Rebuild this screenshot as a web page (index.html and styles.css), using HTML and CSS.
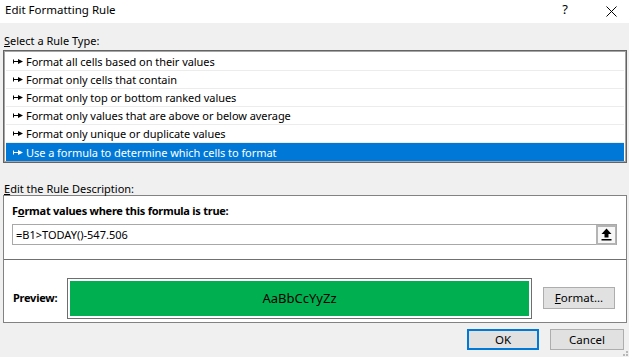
FILE: index.html
```html
<!DOCTYPE html>
<html>
<head>
    <title>Edit Formatting Rule</title>
    <link rel="stylesheet" href="styles.css">
</head>
<body>
    <div class="dialog">
        <div class="titlebar">
            <span class="title">Edit Formatting Rule</span>
            <span class="help">?</span>
            <svg class="close" width="11" height="11" viewBox="0 0 11 11">
                <path d="M0.5 0.5 L10.5 10.5 M10.5 0.5 L0.5 10.5" stroke="#000" stroke-width="1" fill="none"/>
            </svg>
        </div>

        <div class="content">
            <div class="label"><u>S</u>elect a Rule Type:</div>
            <div class="rule-list">
                <div class="rule"><svg class="arrow" width="10" height="5" viewBox="0 0 10 5"><path d="M0 0.5 H1 V4.5 H0 Z M1 2 H5 V3 H1 Z M5 0 L10 2.5 L5 5 Z" fill="currentColor"/></svg>Format all cells based on their values</div>
                <div class="rule"><svg class="arrow" width="10" height="5" viewBox="0 0 10 5"><path d="M0 0.5 H1 V4.5 H0 Z M1 2 H5 V3 H1 Z M5 0 L10 2.5 L5 5 Z" fill="currentColor"/></svg>Format only cells that contain</div>
                <div class="rule"><svg class="arrow" width="10" height="5" viewBox="0 0 10 5"><path d="M0 0.5 H1 V4.5 H0 Z M1 2 H5 V3 H1 Z M5 0 L10 2.5 L5 5 Z" fill="currentColor"/></svg>Format only top or bottom ranked values</div>
                <div class="rule"><svg class="arrow" width="10" height="5" viewBox="0 0 10 5"><path d="M0 0.5 H1 V4.5 H0 Z M1 2 H5 V3 H1 Z M5 0 L10 2.5 L5 5 Z" fill="currentColor"/></svg>Format only values that are above or below average</div>
                <div class="rule"><svg class="arrow" width="10" height="5" viewBox="0 0 10 5"><path d="M0 0.5 H1 V4.5 H0 Z M1 2 H5 V3 H1 Z M5 0 L10 2.5 L5 5 Z" fill="currentColor"/></svg>Format only unique or duplicate values</div>
                <div class="rule selected"><svg class="arrow" width="10" height="5" viewBox="0 0 10 5"><path d="M0 0.5 H1 V4.5 H0 Z M1 2 H5 V3 H1 Z M5 0 L10 2.5 L5 5 Z" fill="currentColor"/></svg>Use a formula to determine which cells to format</div>
            </div>

            <div class="label desc-label"><u>E</u>dit the Rule Description:</div>
            <div class="desc-panel">
                <div class="formula-section">
                    <div class="bold-label">F<u>o</u>rmat values where this formula is true:</div>
                    <div class="formula-input">
                        <span class="formula-text">=B1&gt;TODAY()-547.506</span>
                        <div class="ref-button">
                            <svg width="11" height="13" viewBox="0 0 11 13">
                                <path d="M5.5 0.5 L10.5 6 H7.5 V9.5 H3.5 V6 H0.5 Z" fill="#000"/>
                                <rect x="0.5" y="11" width="10" height="1.5" fill="#000"/>
                            </svg>
                        </div>
                    </div>
                </div>
                <div class="preview-section">
                    <div class="bold-label">Preview:</div>
                    <div class="preview-box">
                        <div class="preview-fill">AaBbCcYyZz</div>
                    </div>
                    <button class="btn format-btn"><u>F</u>ormat...</button>
                </div>
            </div>

            <div class="footer">
                <button class="btn ok-btn">OK</button>
                <button class="btn cancel-btn">Cancel</button>
            </div>
        </div>
        <div class="grip">
            <span></span><span></span><span></span>
        </div>
    </div>
</body>
</html>
```

FILE: styles.css
```css
body {
    margin: 0;
    background-color: #f0f0f0;
    font-family: "Noto Sans", "Open Sans", sans-serif;
    font-size: 11px;
    color: #000;
}
.dialog {
    position: relative;
    width: 629px;
    height: 357px;
    overflow: hidden;
}
.titlebar {
    height: 23px;
    background-color: #fff;
    display: flex;
    align-items: center;
}
.title {
    padding-left: 5px;
    flex-grow: 1;
    font-size: 11.5px;
    line-height: 16px;
    margin-top: -4px;
}
.help {
    font-size: 13px;
    margin-right: 38px;
    margin-top: -5px;
}
.close {
    margin-right: 12px;
    margin-top: -1px;
}
.content {
    padding: 0 2px 0 3px;
}
.label {
    line-height: 16px;
    margin-top: 10px;
    margin-left: 1px;
    height: 17px;
}
.rule-list {
    border: 1px solid #646464;
    box-shadow: inset 0 0 0 1px #a5a5a5;
    background-color: #fff;
    padding: 2px 2px 1px 2px;
}
.rule {
    height: 17px;
    border-bottom: 1px solid #ececec;
    display: flex;
    align-items: center;
    padding-left: 7px;
    line-height: 17px;
    white-space: nowrap;
    letter-spacing: -0.05px;
}
.rule .arrow {
    margin-right: 3px;
    color: #000;
}
.rule.selected {
    background-color: #0078d7;
    color: #fff;
    border-bottom: none;
    height: 18px;
}
.rule.selected .arrow {
    color: #fff;
}
.desc-label {
    margin-top: 18px;
    height: 14px;
}
.desc-panel {
    border: 1px solid #828282;
    background-color: #fff;
}
.formula-section {
    padding: 7px 9px 14px 8px;
    border-bottom: 1px solid #707070;
}
.bold-label {
    font-weight: bold;
    line-height: 16px;
    white-space: nowrap;
    letter-spacing: -0.25px;
}
.formula-input {
    margin-top: 5px;
    height: 19px;
    border: 1px solid #a8a8a8;
    display: flex;
    align-items: center;
    justify-content: space-between;
}
.formula-text {
    padding-left: 3px;
}
.ref-button {
    width: 17px;
    height: 16px;
    border: 2px solid #b4b4b4;
    border-right: 1px solid #b4b4b4;
    background-color: #f7f7f7;
    display: flex;
    align-items: center;
    justify-content: center;
}
.preview-section {
    box-sizing: border-box;
    display: flex;
    align-items: center;
    height: 62px;
    padding: 14px 0 0 9px;
}
.preview-section .bold-label {
    width: 54px;
}
.preview-box {
    width: 459px;
    height: 35px;
    border: 1px solid #6e6e6e;
    padding: 2px;
}
.preview-fill {
    height: 100%;
    background-color: #00b050;
    display: flex;
    align-items: center;
    justify-content: center;
    font-size: 13px;
    color: #000;
}
.btn {
    font-family: "Noto Sans", "Open Sans", sans-serif;
    font-size: 11.5px;
    color: #000;
    background-color: #e1e1e1;
    border: 1px solid #adadad;
    padding: 0;
    line-height: 16px;
}
.format-btn {
    width: 72px;
    height: 22px;
    margin-left: 11px;
}
.footer {
    display: flex;
    justify-content: flex-end;
    gap: 11px;
    margin-top: 6px;
    padding-right: 3px;
}
.ok-btn {
    width: 72px;
    height: 21px;
    border: 2px solid #0078d7;
}
.cancel-btn {
    width: 74px;
    height: 21px;
}
.grip {
    position: absolute;
    right: 1px;
    bottom: 1px;
    width: 8px;
    height: 8px;
}
.grip span {
    position: absolute;
    width: 2px;
    height: 2px;
    background-color: #b8b8b8;
}
.grip span:nth-child(1) { right: 0; bottom: 0; }
.grip span:nth-child(2) { right: 3px; bottom: 0; }
.grip span:nth-child(3) { right: 0; bottom: 3px; }
```
